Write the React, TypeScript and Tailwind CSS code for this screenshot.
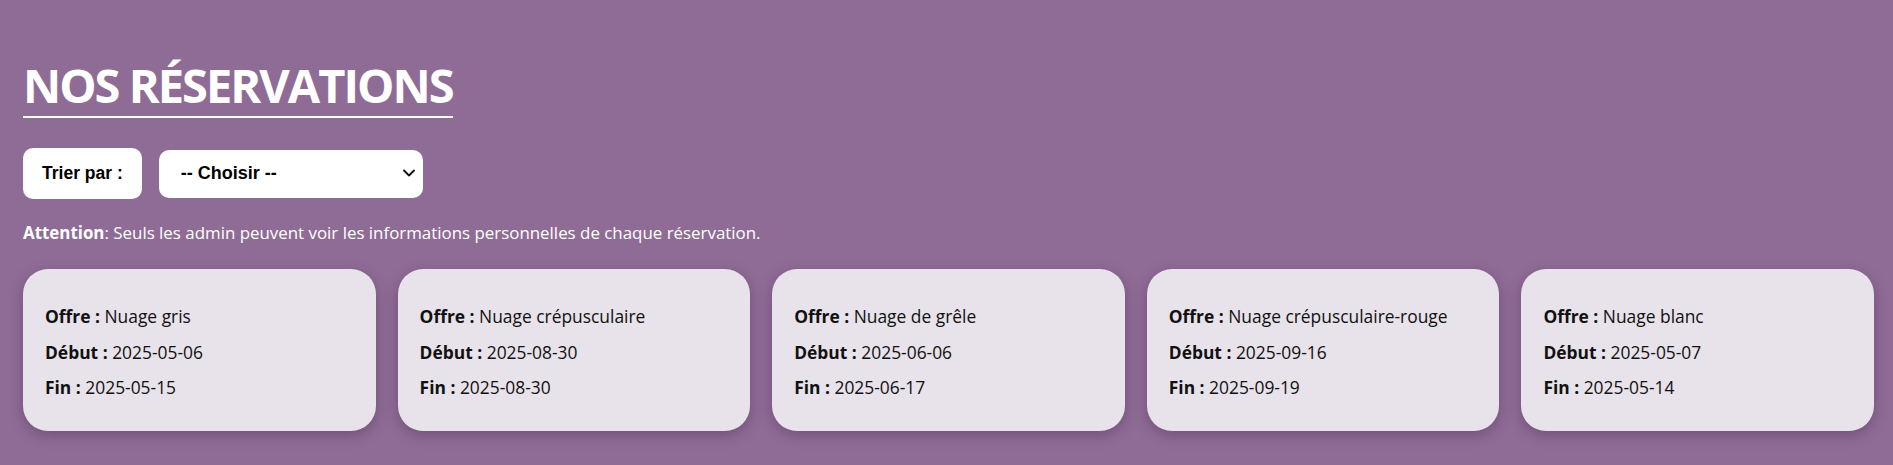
import React from "react";

const cards = [
  { offre: "Nuage gris", debut: "2025-05-06", fin: "2025-05-15" },
  { offre: "Nuage crépusculaire", debut: "2025-08-30", fin: "2025-08-30" },
  { offre: "Nuage de grêle", debut: "2025-06-06", fin: "2025-06-17" },
  { offre: "Nuage crépusculaire-rouge", debut: "2025-09-16", fin: "2025-09-19" },
  { offre: "Nuage blanc", debut: "2025-05-07", fin: "2025-05-14" },
];

export default function App() {
  return (
    <div
      className="w-full h-[465px] bg-[#8f6c96] pl-[23px] pr-[19px] pt-[61px] text-white"
      style={{ fontFamily: '"Open Sans", "Noto Sans", sans-serif' }}
    >
      <h1 className="inline-block text-[47px] leading-[48px] font-bold pb-[7px] border-b-2 border-white tracking-[-2px]">
        NOS RÉSERVATIONS
      </h1>
      <div className="flex items-center gap-[17px] mt-[30px]" style={{ fontFamily: '"Liberation Sans", Arial, sans-serif' }}>
        <div className="h-[51px] px-[19px] flex items-center bg-white rounded-[10px] text-black font-bold text-[17.5px]">
          Trier par :
        </div>
        <div className="relative h-[48px] w-[264px] flex items-center bg-white rounded-[10px] text-black font-bold text-[18px] pl-[22px]">
          -- Choisir --
          <svg className="absolute right-[8px] top-[19px]" width="12" height="8" viewBox="0 0 12 8" fill="none">
            <path d="M1 1.5 L6 6.5 L11 1.5" stroke="#111" strokeWidth="1.8" strokeLinecap="round" strokeLinejoin="round" />
          </svg>
        </div>
      </div>
      <p className="mt-[22px] text-[16.9px] leading-[24px]">
        <span className="font-bold">Attention</span>: Seuls les admin peuvent voir les informations personnelles de chaque réservation.
      </p>
      <div className="flex gap-[22px] mt-[24px]">
        {cards.map((c, i) => (
          <div
            key={i}
            className="flex-1 h-[162px] bg-[#e8e2ea] rounded-[25px] pl-[22px] pt-[35px] text-[#111] text-[17.4px] leading-[24px] flex flex-col gap-[11.5px] shadow-[0_4px_14px_rgba(60,30,70,0.35)]"
          >
            <p><span className="font-bold">Offre :</span> {c.offre}</p>
            <p><span className="font-bold">Début :</span> {c.debut}</p>
            <p><span className="font-bold">Fin :</span> {c.fin}</p>
          </div>
        ))}
      </div>
    </div>
  );
}
